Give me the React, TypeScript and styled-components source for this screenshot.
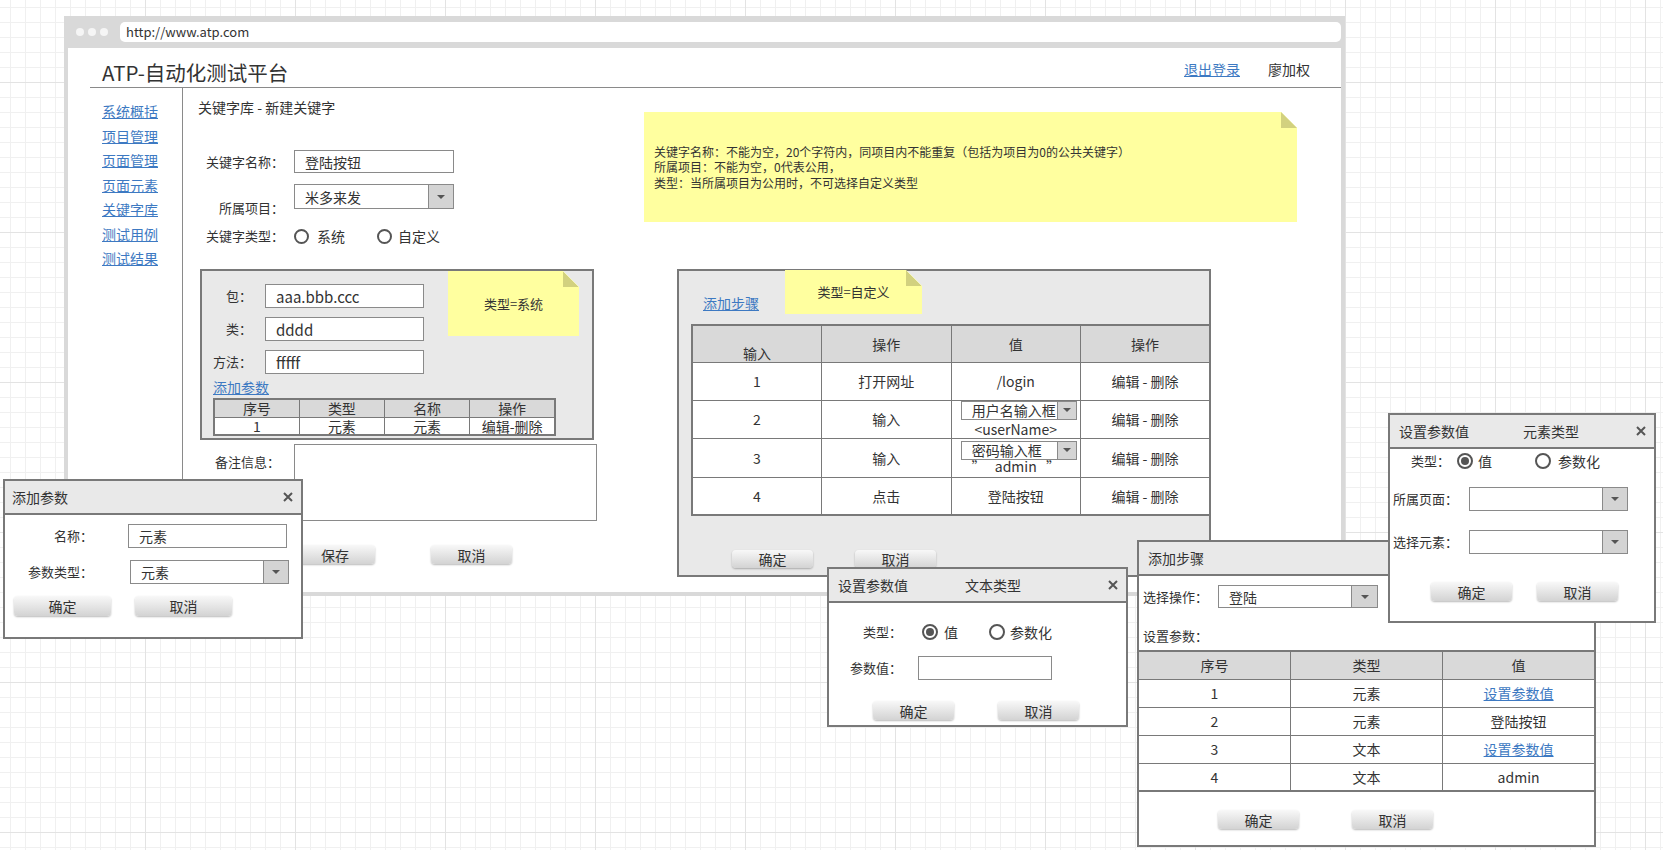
import React from "react";
import styled, { createGlobalStyle } from "styled-components";

const LINE = "#797979";
const PANEL = "#e9e9e9";
const HEAD = "#d9d9d9";
const LINK = "#3d79c2";
const NOTE = "#ffff9f";
const FOLD = "#d2d17f";
const FIELD = "#8a8a8a";

const GlobalStyle = createGlobalStyle`
  html, body { margin: 0; padding: 0; }
  * { box-sizing: border-box; }
  body {
    font-family: "Noto Sans CJK SC", "Noto Sans", sans-serif;
    color: #333;
    background-color: #fff;
    background-image:
      linear-gradient(to right, #e3e3e3 1px, transparent 1px),
      linear-gradient(to bottom, #e3e3e3 1px, transparent 1px),
      linear-gradient(to right, #f0f0f0 1px, transparent 1px),
      linear-gradient(to bottom, #f0f0f0 1px, transparent 1px);
    background-size: 150px 150px, 150px 150px, 15px 15px, 15px 15px;
    background-position: 145px 82px, 145px 82px, 10px 7px, 10px 7px;
  }
`;

const Canvas = styled.div`
  position: relative;
  width: 1663px;
  height: 850px;
  overflow: hidden;
`;

/* ---------- browser frame ---------- */
const Browser = styled.div`
  position: absolute;
  left: 64px;
  top: 16px;
  width: 1281px;
  height: 580px;
  background: #d9d9d9;
  padding: 0 4px 4px;
  display: flex;
  flex-direction: column;
`;
const TopBar = styled.div`
  height: 32px;
  flex-shrink: 0;
  display: flex;
  align-items: center;
`;
const Dots = styled.div`
  display: flex;
  gap: 4px;
  margin-left: 8px;
`;
const Dot = styled.span`
  width: 8px;
  height: 8px;
  border-radius: 50%;
  background: #f5f5f5;
`;
const Url = styled.div`
  flex: 1;
  height: 20px;
  margin-left: 12px;
  background: #fff;
  border-radius: 5px;
  padding-left: 6px;
  font-size: 13px;
  line-height: 20px;
`;
const Page = styled.div`
  flex: 1;
  background: #fff;
  display: flex;
  flex-direction: column;
  min-height: 0;
`;
const Header = styled.header`
  margin-left: 22px;
  height: 40px;
  flex-shrink: 0;
  border-bottom: 1px solid #8a8a8a;
  display: flex;
  align-items: flex-start;
  padding: 11px 31px 0 12px;
`;
const Title = styled.h1`
  margin: 0 auto 0 0;
  font-size: 20.5px;
  line-height: 26px;
  font-weight: normal;
`;
const UserBar = styled.div`
  display: flex;
  gap: 28px;
  font-size: 14px;
  line-height: 18px;
  margin-top: 1px;
`;
const Link = styled.a`
  color: ${LINK};
  text-decoration: underline;
  cursor: pointer;
`;
const Body = styled.div`
  flex: 1;
  display: flex;
  min-height: 0;
`;
const Sidebar = styled.nav`
  margin-left: 22px;
  width: 93px;
  flex-shrink: 0;
  border-right: 1px solid #8a8a8a;
  padding: 14px 0 0 12px;
  display: flex;
  flex-direction: column;
  gap: 6.5px;
`;
const SideLink = styled(Link)`
  font-size: 14px;
  line-height: 18px;
  width: fit-content;
`;
const Content = styled.main`
  flex: 1;
  display: flex;
  flex-direction: column;
`;
const TopSection = styled.div`
  display: flex;
  align-items: flex-start;
`;
const LeftTop = styled.div`
  width: 461px;
  flex-shrink: 0;
`;
const Crumb = styled.div`
  padding: 11px 0 0 15px;
  font-size: 14px;
  line-height: 16px;
`;
const Form = styled.div`
  margin-top: 35px;
  display: flex;
  flex-direction: column;
`;
const FormRow = styled.div<{ $mt?: number }>`
  display: grid;
  grid-template-columns: 101px auto;
  column-gap: 10px;
  align-items: center;
  margin-top: ${(p) => p.$mt ?? 0}px;
`;
const FieldLabel = styled.span<{ $drop?: number }>`
  text-align: right;
  font-size: 13px;
  line-height: 18px;
  white-space: nowrap;
  ${(p) =>
    p.$drop ? `align-self: start; margin-top: ${p.$drop}px; margin-bottom: -${p.$drop}px;` : ""}
`;

/* ---------- generic widgets ---------- */
const TextBox = styled.div<{ $w: number; $h: number; $fs?: number }>`
  width: ${(p) => p.$w}px;
  height: ${(p) => p.$h}px;
  border: 1px solid ${FIELD};
  background: #fff;
  padding-left: 10px;
  display: flex;
  align-items: center;
  font-size: ${(p) => p.$fs ?? 14}px;
  white-space: nowrap;
`;
const SelectBox = styled.div<{ $w: number; $h: number; $ml?: number }>`
  width: ${(p) => p.$w}px;
  height: ${(p) => p.$h}px;
  margin-left: ${(p) => p.$ml ?? 0}px;
  border: 1px solid ${FIELD};
  background: #fff;
  display: flex;
  position: relative;
  z-index: 1;
`;
const SelectText = styled.span<{ $fs: number }>`
  flex: 1;
  padding-left: 10px;
  display: flex;
  align-items: center;
  font-size: ${(p) => p.$fs}px;
  white-space: nowrap;
  overflow: hidden;
`;
const SelectBtn = styled.span<{ $bw: number }>`
  width: ${(p) => p.$bw}px;
  flex-shrink: 0;
  background: #d4d4d4;
  border-left: 1px solid ${FIELD};
  display: flex;
  align-items: center;
  justify-content: center;
  &::after {
    content: "";
    border-left: 4px solid transparent;
    border-right: 4px solid transparent;
    border-top: 4px solid #555;
  }
`;
function Select(props: { w: number; h: number; bw: number; text?: string; fs?: number; ml?: number }) {
  return (
    <SelectBox $w={props.w} $h={props.h} $ml={props.ml}>
      <SelectText $fs={props.fs ?? 14}>{props.text ?? ""}</SelectText>
      <SelectBtn $bw={props.bw} />
    </SelectBox>
  );
}

const RadioSet = styled.div<{ $between: number }>`
  display: flex;
  align-items: center;
  gap: ${(p) => p.$between}px;
`;
const RadioItem = styled.label<{ $gap: number }>`
  display: flex;
  align-items: center;
  gap: ${(p) => p.$gap}px;
  font-size: 14px;
  line-height: 18px;
  white-space: nowrap;
`;
const RadioDot = styled.span<{ $on?: boolean; $size: number }>`
  width: ${(p) => p.$size}px;
  height: ${(p) => p.$size}px;
  border: 2px solid #555;
  border-radius: 50%;
  display: inline-flex;
  align-items: center;
  justify-content: center;
  background: #fff;
  &::after {
    content: "";
    width: 8px;
    height: 8px;
    border-radius: 50%;
    background: #555;
    display: ${(p) => (p.$on ? "block" : "none")};
  }
`;

const Btn = styled.button<{ $w: number; $h: number }>`
  width: ${(p) => p.$w}px;
  height: ${(p) => p.$h}px;
  border: none;
  border-radius: 4px;
  padding: 0;
  background: linear-gradient(#f8f8f8, #d3d3d3);
  box-shadow: 0 1px 2px rgba(0, 0, 0, 0.28);
  font-family: inherit;
  font-size: 14px;
  line-height: 1;
  color: #333;
`;
const BtnRow = styled.div<{ $pl: number; $gap: number; $mt: number }>`
  display: flex;
  align-items: flex-start;
  padding-left: ${(p) => p.$pl}px;
  gap: ${(p) => p.$gap}px;
  margin-top: ${(p) => p.$mt}px;
`;

const Sticky = styled.div<{ $w: number; $h: number; $mt?: number; $ml?: number; $center?: boolean }>`
  position: relative;
  flex-shrink: 0;
  width: ${(p) => p.$w}px;
  height: ${(p) => p.$h}px;
  margin-top: ${(p) => p.$mt ?? 0}px;
  margin-left: ${(p) => p.$ml ?? 0}px;
  background: ${NOTE};
  clip-path: polygon(0 0, calc(100% - 16px) 0, 100% 16px, 100% 100%, 0 100%);
  display: flex;
  align-items: center;
  justify-content: ${(p) => (p.$center ? "center" : "flex-start")};
  font-size: ${(p) => (p.$center ? 13 : 12)}px;
  line-height: 15.5px;
  padding-left: ${(p) => (p.$center ? 0 : 10)}px;
  &::before {
    content: "";
    position: absolute;
    right: 0;
    top: 0;
    width: 16px;
    height: 16px;
    background: linear-gradient(to top right, ${FOLD} 50%, transparent 50%);
  }
`;
const NoteLines = styled.div`
  display: flex;
  flex-direction: column;
`;

const Table = styled.table<{ $w: number; $ml?: number; $mt?: number }>`
  border-collapse: collapse;
  table-layout: fixed;
  width: ${(p) => p.$w}px;
  margin-left: ${(p) => p.$ml ?? 0}px;
  margin-top: ${(p) => p.$mt ?? 0}px;
  border: 2px solid ${LINE};
  background: #fff;
  font-size: 14px;
  position: relative;
`;
const Th = styled.th<{ $h: number; $low?: number }>`
  height: ${(p) => p.$h}px;
  background: ${HEAD};
  font-weight: normal;
  border: 1px solid ${LINE};
  padding: ${(p) => (p.$low ? `${p.$low}px 0 0` : 0)};
  line-height: 16px;
  text-align: center;
`;
const Td = styled.td<{ $h: number; $top?: boolean }>`
  height: ${(p) => p.$h}px;
  border: 1px solid ${LINE};
  padding: 0;
  text-align: center;
  line-height: 16px;
  vertical-align: ${(p) => (p.$top ? "top" : "middle")};
`;
const CellStack = styled.div<{ $pt: number; $overlap: number }>`
  display: flex;
  flex-direction: column;
  align-items: center;
  padding-top: ${(p) => p.$pt}px;
  & > span {
    margin-top: ${(p) => -p.$overlap}px;
    line-height: 18px;
    white-space: pre;
  }
`;

/* ---------- bottom area ---------- */
const BottomSection = styled.div`
  display: flex;
  align-items: flex-start;
  margin-top: 24px;
`;
const LeftBottom = styled.div`
  margin-left: 17px;
  width: 397px;
  flex-shrink: 0;
`;
const SysPanel = styled.section`
  width: 394px;
  height: 171px;
  border: 2px solid ${LINE};
  background: ${PANEL};
  padding: 13px 0 0 11px;
`;
const SysTop = styled.div`
  display: flex;
  align-items: flex-start;
`;
const Fields = styled.div`
  display: flex;
  flex-direction: column;
  gap: 9px;
`;
const SysRow = styled.div`
  display: grid;
  grid-template-columns: 39px 159px;
  column-gap: 13px;
  align-items: center;
`;
const BlockLink = styled(Link)<{ $mt?: number }>`
  display: block;
  width: fit-content;
  font-size: 14px;
  line-height: 16px;
  margin-top: ${(p) => p.$mt ?? 0}px;
`;
const RemarkRow = styled.div`
  display: grid;
  grid-template-columns: 94px 303px;
  margin-top: 4px;
`;
const RemarkLabel = styled.span`
  padding: 9px 0 0 15px;
  font-size: 13px;
  line-height: 18px;
`;
const RemarkBox = styled.div`
  height: 77px;
  border: 1px solid ${FIELD};
  background: #fff;
`;
const CustomPanel = styled.section`
  width: 534px;
  height: 308px;
  margin-left: 80px;
  flex-shrink: 0;
  border: 2px solid ${LINE};
  background: ${PANEL};
`;
const CustTop = styled.div`
  display: flex;
  align-items: flex-start;
  height: 53px;
  padding-left: 24px;
`;

/* ---------- dialogs ---------- */
const Dialog = styled.section<{ $x: number; $y: number; $w: number; $h: number }>`
  position: absolute;
  left: ${(p) => p.$x}px;
  top: ${(p) => p.$y}px;
  width: ${(p) => p.$w}px;
  height: ${(p) => p.$h}px;
  border: 2px solid ${LINE};
  background: #fff;
  display: flex;
  flex-direction: column;
`;
const DlgHead = styled.div<{ $pl: number }>`
  height: 34px;
  flex-shrink: 0;
  background: ${PANEL};
  border-bottom: 2px solid ${LINE};
  display: flex;
  align-items: center;
  padding: 0 8px 0 ${(p) => p.$pl}px;
  font-size: 14px;
  line-height: 18px;
`;
const HeadTitle = styled.span<{ $w?: number }>`
  ${(p) => (p.$w ? `width: ${p.$w}px;` : "")}
  white-space: nowrap;
`;
const CloseBtn = styled.span`
  margin-left: auto;
  display: flex;
  align-items: center;
`;
const DlgBody = styled.div<{ $pt: number; $pl: number }>`
  padding: ${(p) => p.$pt}px 0 0 ${(p) => p.$pl}px;
  display: flex;
  flex-direction: column;
`;
const DlgRow = styled.div<{ $cols: string; $gap: number; $mt?: number }>`
  display: grid;
  grid-template-columns: ${(p) => p.$cols};
  column-gap: ${(p) => p.$gap}px;
  align-items: center;
  margin-top: ${(p) => p.$mt ?? 0}px;
`;
const DlgLabel = styled.span<{ $align?: string; $mt?: number }>`
  font-size: 13px;
  line-height: 18px;
  white-space: nowrap;
  text-align: ${(p) => p.$align ?? "right"};
  margin-top: ${(p) => p.$mt ?? 0}px;
`;
const FlexRow = styled.div<{ $pl: number; $gap: number; $mt?: number }>`
  display: flex;
  align-items: center;
  padding-left: ${(p) => p.$pl}px;
  gap: ${(p) => p.$gap}px;
  margin-top: ${(p) => p.$mt ?? 0}px;
`;

function CloseX() {
  return (
    <CloseBtn>
      <svg width="10" height="10" viewBox="0 0 10 10">
        <path d="M1 1L9 9M9 1L1 9" stroke="#555" strokeWidth="2" />
      </svg>
    </CloseBtn>
  );
}

const nav = ["系统概括", "项目管理", "页面管理", "页面元素", "关键字库", "测试用例", "测试结果"];

const steps = [
  { n: "1", op: "打开网址", v: "/login" },
  { n: "2", op: "输入", v: "user" },
  { n: "3", op: "输入", v: "pwd" },
  { n: "4", op: "点击", v: "登陆按钮" },
];

const params = [
  { n: "1", t: "元素", v: "设置参数值", link: true },
  { n: "2", t: "元素", v: "登陆按钮", link: false },
  { n: "3", t: "文本", v: "设置参数值", link: true },
  { n: "4", t: "文本", v: "admin", link: false },
];

function ValueCell({ v }: { v: string }) {
  if (v === "user") {
    return (
      <Td $h={38} $top>
        <CellStack $pt={0} $overlap={0}>
          <Select w={116} h={19} bw={19} ml={6} text="用户名输入框" />
          <span>&lt;userName&gt;</span>
        </CellStack>
      </Td>
    );
  }
  if (v === "pwd") {
    return (
      <Td $h={39} $top>
        <CellStack $pt={2} $overlap={3}>
          <Select w={116} h={19} bw={19} ml={6} text="密码输入框" />
          <span>{"”   admin   ”"}</span>
        </CellStack>
      </Td>
    );
  }
  return <Td $h={38}>{v}</Td>;
}

export default function App() {
  return (
    <>
      <GlobalStyle />
      <Canvas>
        <Browser>
          <TopBar>
            <Dots>
              <Dot />
              <Dot />
              <Dot />
            </Dots>
            <Url>http://www.atp.com</Url>
          </TopBar>
          <Page>
            <Header>
              <Title>ATP-自动化测试平台</Title>
              <UserBar>
                <Link>退出登录</Link>
                <span>廖加权</span>
              </UserBar>
            </Header>
            <Body>
              <Sidebar>
                {nav.map((n) => (
                  <SideLink key={n}>{n}</SideLink>
                ))}
              </Sidebar>
              <Content>
                <TopSection>
                  <LeftTop>
                    <Crumb>关键字库 - 新建关键字</Crumb>
                    <Form>
                      <FormRow>
                        <FieldLabel>关键字名称：</FieldLabel>
                        <TextBox $w={160} $h={23}>登陆按钮</TextBox>
                      </FormRow>
                      <FormRow $mt={11}>
                        <FieldLabel $drop={15}>所属项目：</FieldLabel>
                        <Select w={160} h={25} bw={25} text="米多来发" />
                      </FormRow>
                      <FormRow $mt={18}>
                        <FieldLabel>关键字类型：</FieldLabel>
                        <RadioSet $between={32}>
                          <RadioItem $gap={8}>
                            <RadioDot $size={15} />
                            系统
                          </RadioItem>
                          <RadioItem $gap={6}>
                            <RadioDot $size={15} />
                            自定义
                          </RadioItem>
                        </RadioSet>
                      </FormRow>
                    </Form>
                  </LeftTop>
                  <Sticky $w={653} $h={110} $mt={24}>
                    <NoteLines>
                      <span>关键字名称：不能为空，20个字符内，同项目内不能重复（包括为项目为0的公共关键字）</span>
                      <span>所属项目：不能为空，0代表公用，</span>
                      <span>类型：当所属项目为公用时，不可选择自定义类型</span>
                    </NoteLines>
                  </Sticky>
                </TopSection>

                <BottomSection>
                  <LeftBottom>
                    <SysPanel>
                      <SysTop>
                        <Fields>
                          <SysRow>
                            <FieldLabel>包：</FieldLabel>
                            <TextBox $w={159} $h={24} $fs={15}>aaa.bbb.ccc</TextBox>
                          </SysRow>
                          <SysRow>
                            <FieldLabel>类：</FieldLabel>
                            <TextBox $w={159} $h={24} $fs={15}>dddd</TextBox>
                          </SysRow>
                          <SysRow>
                            <FieldLabel>方法：</FieldLabel>
                            <TextBox $w={159} $h={24} $fs={15}>fffff</TextBox>
                          </SysRow>
                        </Fields>
                        <Sticky $w={131} $h={65} $mt={-13} $ml={24} $center>
                          类型=系统
                        </Sticky>
                      </SysTop>
                      <BlockLink $mt={5}>添加参数</BlockLink>
                      <Table $w={343} $mt={3}>
                        <thead>
                          <tr>
                            <Th $h={18}>序号</Th>
                            <Th $h={18}>类型</Th>
                            <Th $h={18}>名称</Th>
                            <Th $h={18}>操作</Th>
                          </tr>
                        </thead>
                        <tbody>
                          <tr>
                            <Td $h={17}>1</Td>
                            <Td $h={17}>元素</Td>
                            <Td $h={17}>元素</Td>
                            <Td $h={17}>编辑-删除</Td>
                          </tr>
                        </tbody>
                      </Table>
                    </SysPanel>
                    <RemarkRow>
                      <RemarkLabel>备注信息：</RemarkLabel>
                      <RemarkBox />
                    </RemarkRow>
                    <BtnRow $pl={95} $gap={56} $mt={24}>
                      <Btn $w={80} $h={19}>保存</Btn>
                      <Btn $w={81} $h={19}>取消</Btn>
                    </BtnRow>
                  </LeftBottom>

                  <CustomPanel>
                    <CustTop>
                      <BlockLink $mt={24}>添加步骤</BlockLink>
                      <Sticky $w={137} $h={44} $mt={-1} $ml={26} $center>
                        类型=自定义
                      </Sticky>
                    </CustTop>
                    <Table $w={520} $ml={12}>
                      <thead>
                        <tr>
                          <Th $h={37} $low={18}>输入</Th>
                          <Th $h={37}>操作</Th>
                          <Th $h={37}>值</Th>
                          <Th $h={37}>操作</Th>
                        </tr>
                      </thead>
                      <tbody>
                        {steps.map((s) => (
                          <tr key={s.n}>
                            <Td $h={38}>{s.n}</Td>
                            <Td $h={38}>{s.op}</Td>
                            <ValueCell v={s.v} />
                            <Td $h={38}>编辑 - 删除</Td>
                          </tr>
                        ))}
                      </tbody>
                    </Table>
                    <BtnRow $pl={53} $gap={42} $mt={34}>
                      <Btn $w={81} $h={18}>确定</Btn>
                      <Btn $w={81} $h={18}>取消</Btn>
                    </BtnRow>
                  </CustomPanel>
                </BottomSection>
              </Content>
            </Body>
          </Page>
        </Browser>

        {/* 添加参数 */}
        <Dialog $x={3} $y={479} $w={300} $h={160}>
          <DlgHead $pl={7}>
            <HeadTitle>添加参数</HeadTitle>
            <CloseX />
          </DlgHead>
          <DlgBody $pt={9} $pl={0}>
            <DlgRow $cols="88px 159px" $gap={35}>
              <DlgLabel>名称：</DlgLabel>
              <TextBox $w={159} $h={24}>元素</TextBox>
            </DlgRow>
            <DlgRow $cols="88px 159px" $gap={37} $mt={12}>
              <DlgLabel>参数类型：</DlgLabel>
              <Select w={159} h={24} bw={25} text="元素" />
            </DlgRow>
            <BtnRow $pl={9} $gap={24} $mt={12}>
              <Btn $w={97} $h={20}>确定</Btn>
              <Btn $w={97} $h={20}>取消</Btn>
            </BtnRow>
          </DlgBody>
        </Dialog>

        {/* 设置参数值 文本类型 */}
        <Dialog $x={827} $y={567} $w={301} $h={160}>
          <DlgHead $pl={9}>
            <HeadTitle $w={127}>设置参数值</HeadTitle>
            <HeadTitle>文本类型</HeadTitle>
            <CloseX />
          </DlgHead>
          <DlgBody $pt={20} $pl={0}>
            <DlgRow $cols="73px auto" $gap={20}>
              <DlgLabel>类型：</DlgLabel>
              <RadioSet $between={31}>
                <RadioItem $gap={6}>
                  <RadioDot $size={16} $on />
                  值
                </RadioItem>
                <RadioItem $gap={5}>
                  <RadioDot $size={16} />
                  参数化
                </RadioItem>
              </RadioSet>
            </DlgRow>
            <DlgRow $cols="73px 134px" $gap={16} $mt={15}>
              <DlgLabel>参数值：</DlgLabel>
              <TextBox $w={134} $h={24} />
            </DlgRow>
            <BtnRow $pl={44} $gap={44} $mt={21}>
              <Btn $w={81} $h={19}>确定</Btn>
              <Btn $w={81} $h={19}>取消</Btn>
            </BtnRow>
          </DlgBody>
        </Dialog>

        {/* 添加步骤 */}
        <Dialog $x={1137} $y={540} $w={459} $h={307}>
          <DlgHead $pl={9}>
            <HeadTitle>添加步骤</HeadTitle>
            <CloseX />
          </DlgHead>
          <DlgBody $pt={9} $pl={4}>
            <DlgRow $cols="75px 160px" $gap={0}>
              <DlgLabel $align="left">选择操作：</DlgLabel>
              <Select w={160} h={23} bw={26} text="登陆" />
            </DlgRow>
            <DlgLabel $align="left" $mt={19}>
              设置参数：
            </DlgLabel>
            <Table $w={459} $ml={-6} $mt={5}>
              <thead>
                <tr>
                  <Th $h={28}>序号</Th>
                  <Th $h={28}>类型</Th>
                  <Th $h={28}>值</Th>
                </tr>
              </thead>
              <tbody>
                {params.map((r) => (
                  <tr key={r.n}>
                    <Td $h={28}>{r.n}</Td>
                    <Td $h={28}>{r.t}</Td>
                    <Td $h={28}>{r.link ? <Link>{r.v}</Link> : r.v}</Td>
                  </tr>
                ))}
              </tbody>
            </Table>
            <BtnRow $pl={75} $gap={53} $mt={18}>
              <Btn $w={81} $h={19}>确定</Btn>
              <Btn $w={81} $h={19}>取消</Btn>
            </BtnRow>
          </DlgBody>
        </Dialog>

        {/* 设置参数值 元素类型 */}
        <Dialog $x={1388} $y={413} $w={268} $h={210}>
          <DlgHead $pl={9}>
            <HeadTitle $w={124}>设置参数值</HeadTitle>
            <HeadTitle>元素类型</HeadTitle>
            <CloseX />
          </DlgHead>
          <DlgBody $pt={3} $pl={0}>
            <FlexRow $pl={21} $gap={7}>
              <DlgLabel>类型：</DlgLabel>
              <RadioSet $between={43}>
                <RadioItem $gap={5}>
                  <RadioDot $size={16} $on />
                  值
                </RadioItem>
                <RadioItem $gap={7}>
                  <RadioDot $size={16} />
                  参数化
                </RadioItem>
              </RadioSet>
            </FlexRow>
            <DlgRow $cols="68px 159px" $gap={11} $mt={17}>
              <DlgLabel>所属页面：</DlgLabel>
              <Select w={159} h={24} bw={25} />
            </DlgRow>
            <DlgRow $cols="68px 159px" $gap={11} $mt={19}>
              <DlgLabel>选择元素：</DlgLabel>
              <Select w={159} h={24} bw={25} />
            </DlgRow>
            <BtnRow $pl={41} $gap={25} $mt={28}>
              <Btn $w={81} $h={19}>确定</Btn>
              <Btn $w={81} $h={19}>取消</Btn>
            </BtnRow>
          </DlgBody>
        </Dialog>
      </Canvas>
    </>
  );
}
